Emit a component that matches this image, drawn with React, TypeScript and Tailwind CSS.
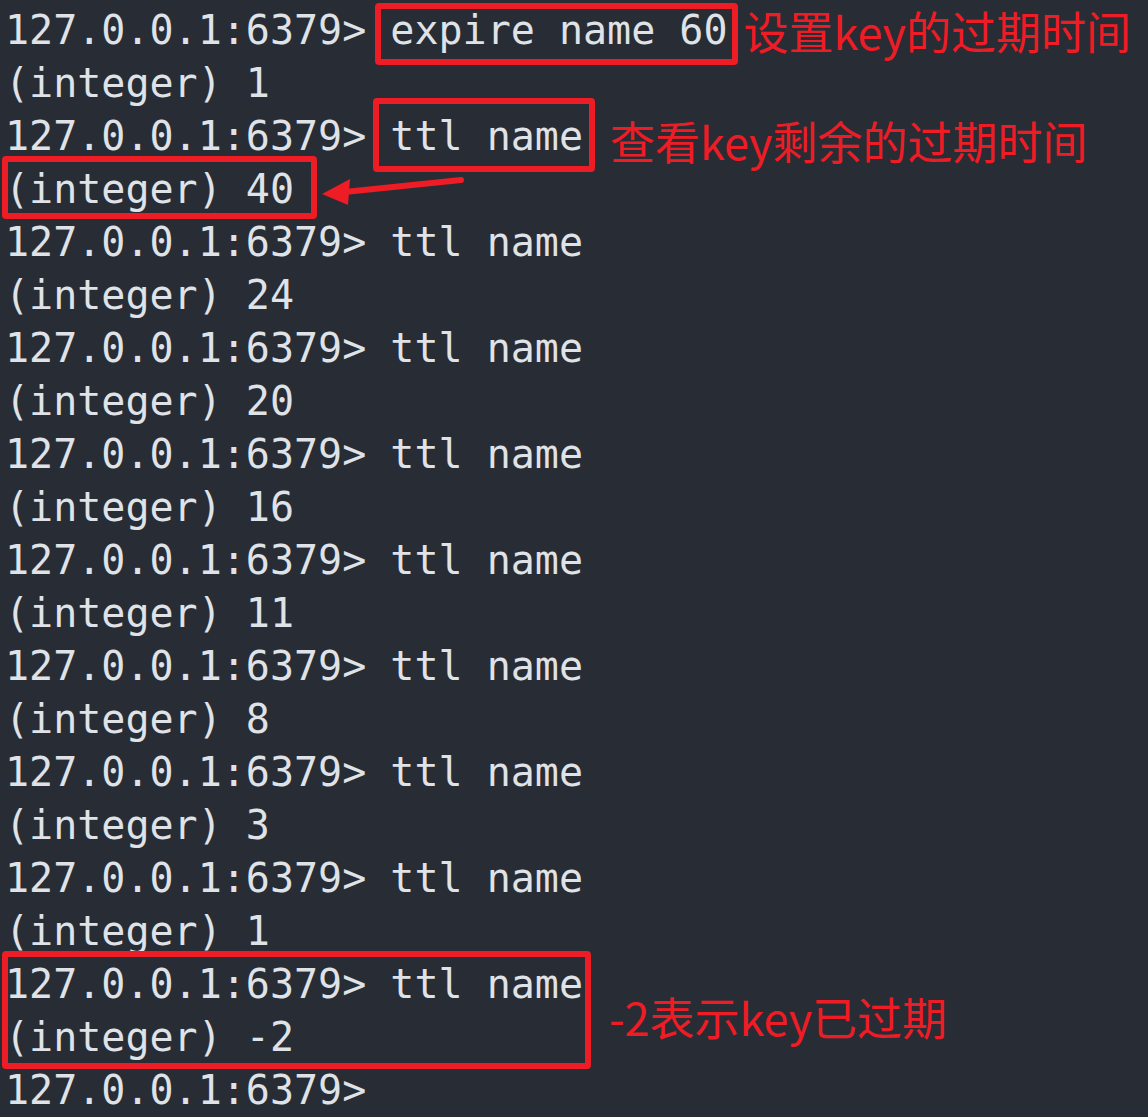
import React from 'react';

const PROMPT = '127.0.0.1:6379> ';

const history: [string, string][] = [
  ['ttl name', '(integer) 24'],
  ['ttl name', '(integer) 20'],
  ['ttl name', '(integer) 16'],
  ['ttl name', '(integer) 11'],
  ['ttl name', '(integer) 8'],
  ['ttl name', '(integer) 3'],
  ['ttl name', '(integer) 1'],
];

const Row = ({ children }: { children: React.ReactNode }) => (
  <div className="flex items-center h-[53px]">{children}</div>
);

// red highlight frame laid over its content
const Boxed = ({ frame, children }: { frame: string; children: React.ReactNode }) => (
  <span className="relative shrink-0">
    {children}
    <span className={`absolute border-[6px] border-[#ee1c25] rounded-[4px] ${frame}`} />
  </span>
);

const Note = ({ className, children }: { className: string; children: React.ReactNode }) => (
  <span
    className={`shrink-0 whitespace-nowrap text-[45px] leading-[53px] text-[#ee1c25] font-['Noto_Sans_CJK_SC','Microsoft_YaHei',sans-serif] ${className}`}
  >
    {children}
  </span>
);

const App = () => {
  return (
    <div className="relative w-[1148px] h-[1117px] overflow-hidden bg-[#282c34]">
      <div className="pt-[4px] pl-[5px] font-['DejaVu_Sans_Mono','Liberation_Mono',monospace] text-[40px] leading-[53px] text-[#dfe2e7] whitespace-pre">
        <Row>
          <span className="shrink-0">{PROMPT}</span>
          <Boxed frame="-left-[15px] -right-[11px] -top-[1px] -bottom-[8px]">expire name 60</Boxed>
          <Note className="ml-[16px]">设置key的过期时间</Note>
        </Row>
        <Row>(integer) 1</Row>
        <Row>
          <span className="shrink-0">{PROMPT}</span>
          <Boxed frame="-left-[17px] -right-[12px] -top-[12px] -bottom-[9px]">ttl name</Boxed>
          <Note className="ml-[27px] mt-[7px]">查看key剩余的过期时间</Note>
        </Row>
        <Row>
          <Boxed frame="-left-[3px] -right-[23px] -top-[7px] -bottom-[3px]">(integer) 40</Boxed>
        </Row>

        {history.map(([cmd, out], i) => (
          <React.Fragment key={i}>
            <Row>{PROMPT + cmd}</Row>
            <Row>{out}</Row>
          </React.Fragment>
        ))}

        <div className="flex items-center">
          <Boxed frame="-left-[3px] -right-[8px] -top-[7px] -bottom-[5px]">
            <Row>{PROMPT}ttl name</Row>
            <Row>(integer) -2</Row>
          </Boxed>
          <Note className="ml-[26px] mt-[10px]">-2表示key已过期</Note>
        </div>
        <Row>{PROMPT.trim()}</Row>
      </div>

      {/* arrow pointing at the remaining ttl */}
      <svg className="absolute left-0 top-0" width="1148" height="1117" viewBox="0 0 1148 1117">
        <line x1="461" y1="180" x2="335" y2="193" stroke="#ee1c25" strokeWidth="6" strokeLinecap="round" />
        <polygon points="322,194 350,179 348,205" fill="#ee1c25" />
      </svg>
    </div>
  );
};

export default App;
